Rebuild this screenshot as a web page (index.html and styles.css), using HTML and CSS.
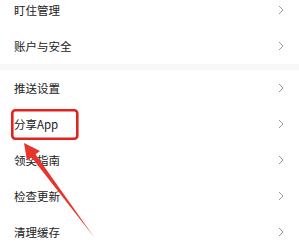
FILE: index.html
```html
<!DOCTYPE html>
<html lang="zh-CN">
<head>
  <meta charset="UTF-8">
  <title>设置</title>
  <link rel="stylesheet" href="styles.css">
</head>
<body>

  <div class="page">
    <div class="group first">
      <div class="row"><span>盯住管理</span><svg class="arrow" viewBox="0 0 6 10"><polyline points="1,1 5,5 1,9"/></svg></div>
      <div class="row"><span>账户与安全</span><svg class="arrow" viewBox="0 0 6 10"><polyline points="1,1 5,5 1,9"/></svg></div>
    </div>

    <div class="gap"></div>

    <div class="group">
      <div class="row"><span>推送设置</span><svg class="arrow" viewBox="0 0 6 10"><polyline points="1,1 5,5 1,9"/></svg></div>
      <div class="row"><span>分享App</span><svg class="arrow" viewBox="0 0 6 10"><polyline points="1,1 5,5 1,9"/></svg></div>
      <div class="row"><span>领奖指南</span><svg class="arrow" viewBox="0 0 6 10"><polyline points="1,1 5,5 1,9"/></svg></div>
      <div class="row"><span>检查更新</span><svg class="arrow" viewBox="0 0 6 10"><polyline points="1,1 5,5 1,9"/></svg></div>
      <div class="row"><span>清理缓存</span><svg class="arrow" viewBox="0 0 6 10"><polyline points="1,1 5,5 1,9"/></svg></div>
    </div>

    <!-- 标注：红框 + 红色箭头 -->
    <svg class="mark" viewBox="0 0 299 244">
      <rect x="12.3" y="110.3" width="65" height="28.5" rx="3" fill="none" stroke="#e3221e" stroke-width="2.6"/>
      <polygon points="24,143 40,151 35.5,154.3 94,237 31.5,157.3 27,160.6" fill="#e8342b"/>
    </svg>
  </div>

</body>
</html>
```

FILE: styles.css
```css
body {
  margin: 0;
  background: #fff;
  font-family: "Noto Sans CJK SC", "Noto Sans", sans-serif;
  color: #222;
  overflow: hidden;
}
.page {
  position: relative;
  width: 299px;
  height: 244px;
  overflow: hidden;
}
.group.first {
  margin-top: -8px;
}
.row {
  height: 36px;
  display: flex;
  align-items: center;
  justify-content: space-between;
  padding: 0 14px 0 14px;
  font-size: 11.5px;
}
.arrow {
  width: 6px;
  height: 10px;
  fill: none;
  stroke: #999;
  stroke-width: 1;
  margin-right: 1px;
}
.gap {
  height: 6px;
  background: #f7f7f7;
}
.mark {
  position: absolute;
  left: 0;
  top: 0;
  width: 299px;
  height: 244px;
}
```
